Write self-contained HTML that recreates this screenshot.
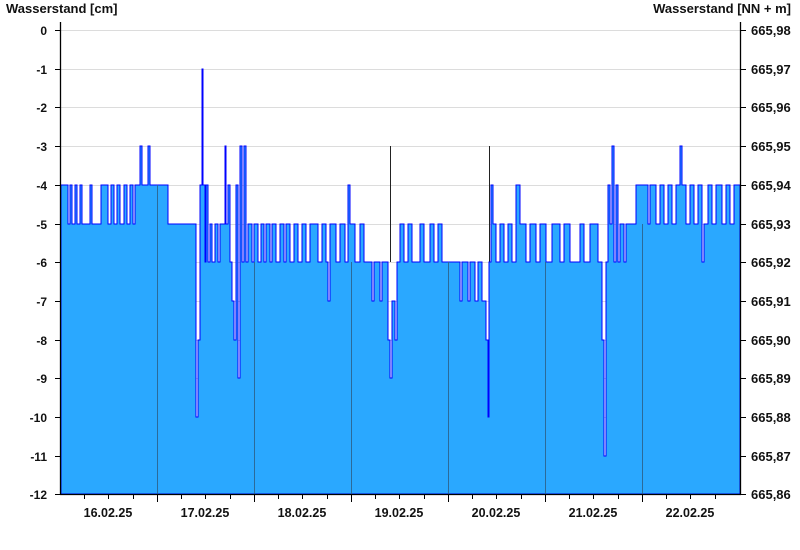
<!DOCTYPE html>
<html><head><meta charset="utf-8"><style>
html,body{margin:0;padding:0;background:#fff;width:800px;height:550px;overflow:hidden}
svg{display:block}
text{font-family:"Liberation Sans",Arial,sans-serif;font-weight:bold;font-size:12px;fill:#111}
.t{font-size:13px}
.r{font-size:13px}
.d{font-size:12.5px}
</style></head><body>
<svg width="800" height="550" viewBox="0 0 800 550">
<text class="t" x="6" y="13">Wasserstand [cm]</text>
<text class="t" x="791" y="13" text-anchor="end">Wasserstand [NN + m]</text>
<g stroke="#dcdcdc" stroke-width="1">
<line x1="61" x2="740" y1="30.5" y2="30.5"/><line x1="61" x2="740" y1="69.5" y2="69.5"/><line x1="61" x2="740" y1="107.5" y2="107.5"/><line x1="61" x2="740" y1="146.5" y2="146.5"/><line x1="61" x2="740" y1="185.5" y2="185.5"/><line x1="61" x2="740" y1="224.5" y2="224.5"/><line x1="61" x2="740" y1="262.5" y2="262.5"/><line x1="61" x2="740" y1="301.5" y2="301.5"/><line x1="61" x2="740" y1="340.5" y2="340.5"/><line x1="61" x2="740" y1="378.5" y2="378.5"/><line x1="61" x2="740" y1="417.5" y2="417.5"/><line x1="61" x2="740" y1="456.5" y2="456.5"/>
</g>
<g stroke="#222" stroke-width="1">
<line x1="349.5" x2="349.5" y1="185" y2="230"/><line x1="390.5" x2="390.5" y1="146" y2="262"/><line x1="489.5" x2="489.5" y1="146" y2="262"/>
</g>
<path fill="#2aa8ff" stroke="#0000ff" stroke-width="1" d="M61,494 V185 H68 V224 H70 V185 H72 V224 H75 V185 H77 V224 H80 V185 H82 V224 H90 V185 H92 V224 H101 V185 H108 V224 H111 V185 H114 V224 H117 V185 H120 V224 H124 V185 H127 V224 H130 V185 H133 V224 H135 V185 H140 V146 H142 V185 H148 V146 H150 V185 H168 V224 H196 V417 H198 V340 H200 V185 H202 V69 H203 V185 H205 V262 H206 V185 H208 V262 H210 V224 H212 V262 H215 V224 H218 V262 H220 V224 H225 V146 H226 V224 H228 V185 H230 V262 H232 V301 H234 V340 H236 V185 H238 V378 H240 V146 H242 V262 H244 V146 H246 V262 H248 V224 H252 V262 H254 V224 H258 V262 H261 V224 H264 V262 H266 V224 H270 V262 H272 V224 H276 V262 H280 V224 H284 V262 H286 V224 H290 V262 H294 V224 H298 V262 H302 V224 H306 V262 H310 V224 H318 V262 H322 V224 H326 V262 H328 V301 H330 V224 H336 V262 H340 V224 H345 V262 H348 V185 H350 V224 H355 V262 H360 V224 H364 V262 H372 V301 H374 V262 H380 V301 H382 V262 H388 V340 H390 V378 H392 V301 H395 V340 H397 V262 H400 V224 H404 V262 H408 V224 H412 V262 H420 V224 H424 V262 H430 V224 H434 V262 H438 V224 H442 V262 H460 V301 H462 V262 H468 V301 H470 V262 H475 V301 H478 V262 H482 V301 H486 V340 H488 V417 H489 V262 H491 V185 H493 V224 H496 V262 H500 V224 H504 V262 H508 V224 H512 V262 H516 V185 H520 V224 H526 V262 H530 V224 H536 V262 H540 V224 H546 V262 H552 V224 H560 V262 H564 V224 H570 V262 H580 V224 H584 V262 H590 V224 H598 V262 H602 V340 H604 V456 H606 V262 H608 V185 H610 V224 H612 V146 H614 V262 H616 V185 H618 V262 H620 V224 H624 V262 H626 V224 H636 V185 H648 V224 H650 V185 H656 V224 H660 V185 H664 V224 H668 V185 H672 V224 H676 V185 H680 V146 H682 V185 H686 V224 H690 V185 H694 V224 H698 V185 H702 V262 H704 V224 H708 V185 H712 V224 H716 V185 H722 V224 H726 V185 H730 V224 H734 V185 H740 V494 Z"/>
<g stroke="#2b6a99" stroke-width="1">
<line x1="157.5" x2="157.5" y1="185" y2="494"/><line x1="254.5" x2="254.5" y1="262" y2="494"/><line x1="351.5" x2="351.5" y1="262" y2="494"/><line x1="448.5" x2="448.5" y1="262" y2="494"/><line x1="545.5" x2="545.5" y1="262" y2="494"/><line x1="642.5" x2="642.5" y1="224" y2="494"/>
</g>
<g stroke="#000" stroke-width="1.3">
<line x1="60.5" x2="60.5" y1="22" y2="495"/><line x1="740.5" x2="740.5" y1="22" y2="495"/><line x1="60" x2="741" y1="494.5" y2="494.5"/>
</g>
<g stroke="#000" stroke-width="1">
<path d="M55,30.5h5M55,69.5h5M55,107.5h5M55,146.5h5M55,185.5h5M55,224.5h5M55,262.5h5M55,301.5h5M55,340.5h5M55,378.5h5M55,417.5h5M55,456.5h5M55,494.5h5"/>
<path d="M741,30.5h5M741,69.5h5M741,107.5h5M741,146.5h5M741,185.5h5M741,224.5h5M741,262.5h5M741,301.5h5M741,340.5h5M741,378.5h5M741,417.5h5M741,456.5h5M741,494.5h5"/>
<path d="M157.5,494v8M254.5,494v8M351.5,494v8M448.5,494v8M545.5,494v8M642.5,494v8"/>
<path d="M84.5,494v5M108.5,494v5M133.5,494v5M181.5,494v5M205.5,494v5M230.5,494v5M278.5,494v5M302.5,494v5M327.5,494v5M375.5,494v5M399.5,494v5M424.5,494v5M472.5,494v5M496.5,494v5M521.5,494v5M569.5,494v5M593.5,494v5M618.5,494v5M666.5,494v5M690.5,494v5M715.5,494v5"/>
</g>
<g text-anchor="end">
<text x="47" y="35">0</text><text x="47" y="74">-1</text><text x="47" y="112">-2</text><text x="47" y="151">-3</text><text x="47" y="190">-4</text><text x="47" y="229">-5</text><text x="47" y="267">-6</text><text x="47" y="306">-7</text><text x="47" y="345">-8</text><text x="47" y="383">-9</text><text x="47" y="422">-10</text><text x="47" y="461">-11</text><text x="47" y="499">-12</text>
</g>
<g class="r">
<text class="r" x="751" y="35">665,98</text><text class="r" x="751" y="74">665,97</text><text class="r" x="751" y="112">665,96</text><text class="r" x="751" y="151">665,95</text><text class="r" x="751" y="190">665,94</text><text class="r" x="751" y="229">665,93</text><text class="r" x="751" y="267">665,92</text><text class="r" x="751" y="306">665,91</text><text class="r" x="751" y="345">665,90</text><text class="r" x="751" y="383">665,89</text><text class="r" x="751" y="422">665,88</text><text class="r" x="751" y="461">665,87</text><text class="r" x="751" y="499">665,86</text>
</g>
<g text-anchor="middle">
<text class="d" x="108" y="517">16.02.25</text><text class="d" x="205" y="517">17.02.25</text><text class="d" x="302" y="517">18.02.25</text><text class="d" x="399" y="517">19.02.25</text><text class="d" x="496" y="517">20.02.25</text><text class="d" x="593" y="517">21.02.25</text><text class="d" x="690" y="517">22.02.25</text>
</g>
</svg>
</body></html>
